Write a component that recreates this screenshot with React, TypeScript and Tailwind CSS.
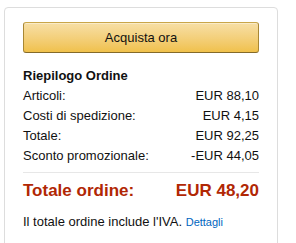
const rows = [
  { label: "Articoli:", value: "EUR 88,10" },
  { label: "Costi di spedizione:", value: "EUR 4,15" },
  { label: "Totale:", value: "EUR 92,25" },
  { label: "Sconto promozionale:", value: "-EUR 44,05" },
];

const App = () => {
  return (
    <div className="h-[243px] overflow-hidden bg-white pl-[4px] pt-[7px] font-['Liberation_Sans',Arial,sans-serif] text-[#111]">
      <div className="h-[260px] w-[274px] rounded-[4px] border border-[#ddd] px-[18px] pt-[14px]">
        {/* buy button */}
        <button className="flex h-[31px] w-full items-center justify-center rounded-[3px] border border-[#a88734] border-t-[#c9a649] border-b-[#846a29] bg-gradient-to-b from-[#f7dfa5] to-[#f0c14b] text-[13px] leading-none text-[#111] shadow-[inset_0_1px_0_rgba(255,255,255,0.4)]">
          Acquista ora
        </button>

        <h5 className="mt-[13px] text-[13px] font-bold leading-[20px]">
          Riepilogo Ordine
        </h5>
        {rows.map((row) => (
          <div
            key={row.label}
            className="flex justify-between text-[13px] leading-[20px]"
          >
            <span>{row.label}</span>
            <span>{row.value}</span>
          </div>
        ))}

        <hr className="mt-[6px] border-t border-[#e7e7e7]" />

        <div className="mt-[6px] flex justify-between text-[17px] font-bold leading-[24px] text-[#b12704]">
          <span>Totale ordine:</span>
          <span>EUR 48,20</span>
        </div>

        <p className="mt-[9px] text-[13px] leading-[20px]">
          Il totale ordine include l'IVA.{" "}
          <a href="#" className="text-[11px] text-[#0066c0]">
            Dettagli
          </a>
        </p>
      </div>
    </div>
  );
};

export default App;
